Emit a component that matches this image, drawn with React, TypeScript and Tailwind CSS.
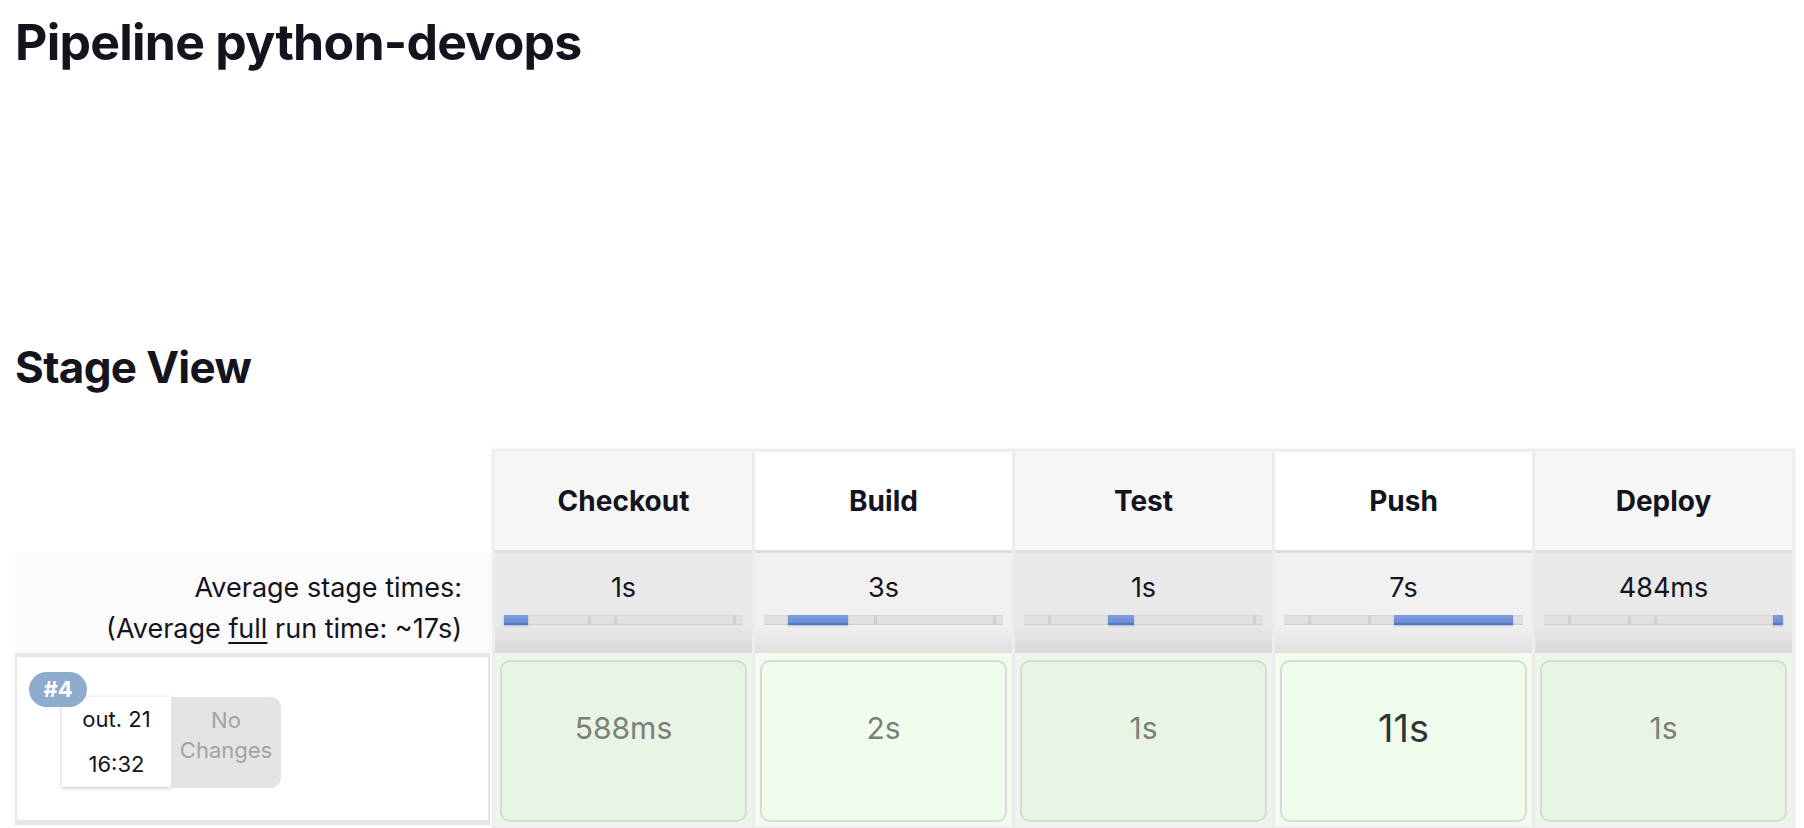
const stages = [
  { name: "Checkout", avg: "1s", from: 0, to: 10, run: "588ms", alt: true, big: false },
  { name: "Build", avg: "3s", from: 10, to: 35, run: "2s", alt: false, big: false },
  { name: "Test", avg: "1s", from: 35, to: 46, run: "1s", alt: true, big: false },
  { name: "Push", avg: "7s", from: 46, to: 96, run: "11s", alt: false, big: true },
  { name: "Deploy", avg: "484ms", from: 96, to: 100, run: "1s", alt: true, big: false },
];

const ticks = [10, 35, 46, 96];

function TimeBar({ from, to }: { from: number; to: number }) {
  return (
    <div className="relative mx-[9px] mt-[12px] h-[10px] border-b border-[#cfcfcf] bg-[linear-gradient(to_bottom,#d4d4d4,#e3e3e3_25%,#dedede)]">
      {ticks
        .filter((t) => t < from || t > to)
        .map((t) => (
          <div
            key={t}
            className="absolute top-0 h-full w-[3px] bg-[#d0d0d0]"
            style={{ left: `${t}%` }}
          />
        ))}
      <div
        className="absolute top-0 h-[10px] border-b-2 border-[#5677c0] bg-[linear-gradient(to_bottom,#7f9edb,#6a8ed6)] shadow-[0_1px_2px_rgba(60,90,160,0.35)]"
        style={{ left: `${from}%`, width: `${to - from}%` }}
      />
    </div>
  );
}

function StageColumn({ stage }: { stage: (typeof stages)[number] }) {
  return (
    <div className="flex w-[257px] flex-col">
      <div
        className={`flex h-[98px] items-center justify-center text-[28px] font-bold ${
          stage.alt ? "bg-[#f6f6f6]" : "bg-white"
        }`}
      >
        {stage.name}
      </div>
      <div
        className={`h-[103px] border-t-[3px] border-[#dedede] pt-[20px] ${
          stage.alt
            ? "bg-[linear-gradient(to_bottom,#e9e9e9_72%,#d9d9d9)]"
            : "bg-[linear-gradient(to_bottom,#f1f1f1_72%,#e0e0e0)]"
        }`}
      >
        <div className="text-center text-[27px] leading-[30px]">{stage.avg}</div>
        <TimeBar from={stage.from} to={stage.to} />
      </div>
      <div
        className={`h-[173px] px-[5px] pb-[4px] pt-[7px] ${
          stage.alt ? "bg-[#edf6ea]" : "bg-[#f1fbee]"
        }`}
      >
        <div
          className={`flex h-full items-center justify-center rounded-[10px] border-2 border-[#d8dbd6] pb-[26px] ${
            stage.alt ? "bg-[#e8f4e4]" : "bg-[#f0fdec]"
          }`}
        >
          {stage.big ? (
            <span className="text-[38px] leading-[44px] text-[#2f3437]">{stage.run}</span>
          ) : (
            <span className="text-[30px] leading-[34px] text-[#7b807b]">{stage.run}</span>
          )}
        </div>
      </div>
    </div>
  );
}

export default function App() {
  return (
    <div className="min-h-screen overflow-hidden bg-white font-['Inter',sans-serif] text-[#14141f]">
      <h1 className="pl-[15px] pt-[17px] text-[50px] font-bold leading-none tracking-[-0.015em]">
        Pipeline python-devops
      </h1>
      <h2 className="mt-[278px] pl-[15px] text-[44px] font-bold leading-none tracking-[-0.015em]">
        Stage View
      </h2>

      <div className="mt-[60px] flex pl-[15px]">
        {/* left column: labels and the run */}
        <div className="flex w-[475px] flex-col">
          <div className="h-[104px]" />
          <div className="h-[100px] bg-[#fbfbfb] pr-[28px] pt-[14px] text-right text-[27px] leading-[41px]">
            <div>Average stage times:</div>
            <div>
              (Average <span className="underline underline-offset-4">full</span> run time: ~17s)
            </div>
          </div>
          <div className="relative h-[172px] border-x-2 border-b-[5px] border-t-4 border-[#e6e6e6] bg-white">
            <div className="absolute left-[12px] top-[15px] z-10 flex h-[35px] w-[58px] items-center justify-center rounded-full bg-[#8fabce] text-[22px] font-bold text-white">
              #4
            </div>
            <div className="ml-[45px] mt-[40px] flex">
              <div className="flex h-[90px] w-[109px] flex-col items-center bg-white text-[22px] leading-[45px] shadow-[0_1px_4px_rgba(0,0,0,0.25)]">
                <div>out. 21</div>
                <div>16:32</div>
              </div>
              <div className="flex h-[91px] w-[110px] flex-col items-center rounded-r-[10px] bg-[#e4e4e4] pt-[8px] text-[22px] leading-[30px] text-[#a3a3a3]">
                <div>No</div>
                <div>Changes</div>
              </div>
            </div>
          </div>
        </div>

        {/* stage table */}
        <div className="ml-[2px] flex gap-[3px] self-start border-[3px] border-[#eeeeee] bg-[#ececec] shadow-[0_0_4px_rgba(0,0,0,0.08)]">
          {stages.map((s) => (
            <StageColumn key={s.name} stage={s} />
          ))}
        </div>
      </div>
    </div>
  );
}
